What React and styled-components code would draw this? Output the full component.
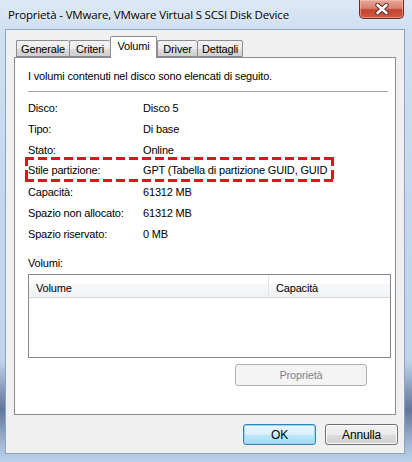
import React from 'react';
import styled, { createGlobalStyle } from 'styled-components';

const GlobalStyle = createGlobalStyle`
  html, body {
    margin: 0;
    padding: 0;
    background: #c9dbef;
  }
  body {
    font-family: "Liberation Sans", Arial, sans-serif;
    font-size: 11px;
    letter-spacing: -0.17px;
    color: #000;
  }
`;

const tabs = [
  { label: 'Generale', width: 53 },
  { label: 'Criteri', width: 41 },
  { label: 'Volumi', width: 47, active: true },
  { label: 'Driver', width: 40 },
  { label: 'Dettagli', width: 46 },
];

const props = [
  ['Disco:', 'Disco 5'],
  ['Tipo:', 'Di base'],
  ['Stato:', 'Online'],
  ['Stile partizione:', 'GPT (Tabella di partizione GUID, GUID', true],
  ['Capacità:', '61312 MB'],
  ['Spazio non allocato:', '61312 MB'],
  ['Spazio riservato:', '0 MB'],
];

const App = () => {
  return (
    <>
      <GlobalStyle />
      <Window>
        <TitleBar>
          <Title>Proprietà - VMware, VMware Virtual S SCSI Disk Device</Title>
          <CloseButton>
            <svg width="16" height="12" viewBox="0 0 16 12">
              <path
                d="M3.5 2 L12.5 10 M12.5 2 L3.5 10"
                stroke="#5a2a24"
                strokeWidth="4.4"
                strokeLinecap="round"
                fill="none"
              />
              <path
                d="M3.5 2 L12.5 10 M12.5 2 L3.5 10"
                stroke="#fff"
                strokeWidth="2.6"
                strokeLinecap="round"
                fill="none"
              />
            </svg>
          </CloseButton>
        </TitleBar>

        <Client>
          <TabStrip>
            {tabs.map((t) => (
              <Tab key={t.label} $w={t.width} $active={t.active}>
                {t.label}
              </Tab>
            ))}
          </TabStrip>

          <Panel>
            <Intro>I volumi contenuti nel disco sono elencati di seguito.</Intro>
            <Separator />
            <PropList>
              {props.map(([label, value, mark]) =>
                mark ? (
                  <MarkedRow key={label}>
                    <Label>{label}</Label>
                    <Value>{value}</Value>
                  </MarkedRow>
                ) : (
                  <Row key={label}>
                    <Label>{label}</Label>
                    <Value>{value}</Value>
                  </Row>
                )
              )}
            </PropList>

            <SectionLabel>Volumi:</SectionLabel>
            <ListBox>
              <ListHeader>
                <HeaderCell $w={240}>Volume</HeaderCell>
                <HeaderCell>Capacità</HeaderCell>
              </ListHeader>
            </ListBox>

            <PanelActions>
              <DisabledButton>Proprietà</DisabledButton>
            </PanelActions>
          </Panel>

          <DialogButtons>
            <DialogButton $default>OK</DialogButton>
            <DialogButton>Annulla</DialogButton>
          </DialogButtons>
        </Client>
      </Window>
    </>
  );
};

export default App;

const Window = styled.div`
  width: 412px;
  height: 462px;
  display: flex;
  flex-direction: column;
  box-sizing: border-box;
  padding: 0 7px 9px 5px;
  background:
    linear-gradient(to bottom, transparent 0, transparent 360px, rgba(20, 40, 90, 0.55) 410px, rgba(20, 40, 90, 0.2) 440px, transparent 462px),
    linear-gradient(to bottom, #dce8f5 0, #cfe0f2 30px, #c3d8ee 200px, #bcd3eb 100%);
`;

const TitleBar = styled.div`
  height: 29px;
  display: flex;
  justify-content: space-between;
  align-items: flex-start;
  margin-right: 1px;
`;

const Title = styled.div`
  font-family: "Open Sans", "Liberation Sans", sans-serif;
  font-size: 11.5px;
  line-height: 29px;
  padding-left: 3px;
  color: #000;
  letter-spacing: -0.18px;
  text-shadow: 0 0 6px rgba(255, 255, 255, 0.9);
`;

const CloseButton = styled.div`
  width: 45px;
  height: 19px;
  box-sizing: border-box;
  border: 1px solid #6b2b25;
  border-top: none;
  border-radius: 0 0 5px 5px;
  background: linear-gradient(to bottom, #e8a896 0, #d98170 45%, #c3432f 55%, #cf5b40 100%);
  box-shadow: inset 0 0 0 1px rgba(255, 200, 190, 0.5);
  display: flex;
  align-items: center;
  justify-content: center;
`;

const Client = styled.div`
  flex: 1;
  display: flex;
  flex-direction: column;
  background: #f0f0f0;
  border: 1px solid #8ea3bd;
  padding: 7px 8px 8px 8px;
`;

const TabStrip = styled.div`
  display: flex;
  align-items: flex-end;
  padding-left: 2px;
  height: 20px;
  position: relative;
  z-index: 1;
`;

const Tab = styled.div`
  width: ${({ $w }) => $w}px;
  box-sizing: border-box;
  height: ${({ $active }) => ($active ? 22 : 17)}px;
  margin-bottom: ${({ $active }) => ($active ? -1 : 0)}px;
  border: 1px solid #898c95;
  border-bottom: ${({ $active }) => ($active ? 'none' : '1px solid #898c95')};
  border-right: ${({ $active }) => ($active ? '1px solid #898c95' : 'none')};
  border-radius: 2px 2px 0 0;
  background: ${({ $active }) =>
    $active ? '#fff' : 'linear-gradient(to bottom, #f3f3f3 0, #ebebeb 50%, #dddddd 51%, #cfcfcf 100%)'};
  display: flex;
  justify-content: center;
  padding-top: ${({ $active }) => ($active ? 2 : 1)}px;
  line-height: 14px;
  &:last-child {
    border-right: 1px solid #898c95;
  }
`;

const Panel = styled.div`
  height: 358px;
  box-sizing: border-box;
  background: #fff;
  border: 1px solid #898c95;
  display: flex;
  flex-direction: column;
  padding: 11px 4px 0 13px;
`;

const Intro = styled.div`
  line-height: 14px;
`;

const Separator = styled.div`
  height: 1px;
  background: #a0a0a0;
  margin: 8px 3px 0 0;
`;

const PropList = styled.div`
  display: flex;
  flex-direction: column;
  margin-top: 5px;
`;

const Row = styled.div`
  display: flex;
  align-items: center;
  height: 21.1px;
`;

const MarkedRow = styled.div`
  display: flex;
  align-items: center;
  height: 19px;
  width: 303px;
  padding: 3px;
  margin: -3px 0 -1px -3px;
  background:
    repeating-linear-gradient(90deg, #e8101a 0 9px, transparent 9px 13px) left top / 100% 3px no-repeat,
    repeating-linear-gradient(90deg, #e8101a 0 9px, transparent 9px 13px) left bottom / 100% 3px no-repeat,
    repeating-linear-gradient(180deg, #e8101a 0 9px, transparent 9px 13px) left top / 3px 100% no-repeat,
    repeating-linear-gradient(180deg, #e8101a 0 9px, transparent 9px 13px) right top / 3px 100% no-repeat;
  overflow: hidden;
  white-space: nowrap;
`;

const Label = styled.div`
  width: 115px;
  flex-shrink: 0;
`;

const Value = styled.div`
  white-space: nowrap;
`;

const SectionLabel = styled.div`
  margin-top: 11px;
  line-height: 14px;
`;

const ListBox = styled.div`
  margin-top: 4px;
  height: 84px;
  box-sizing: border-box;
  border: 1px solid #828790;
  background: #fff;
`;

const ListHeader = styled.div`
  display: flex;
  height: 23px;
  box-sizing: border-box;
  border-bottom: 1px solid #d5d5d5;
  background: linear-gradient(to bottom, #fff 0, #fff 40%, #f7f8f9 41%, #f1f2f4 100%);
`;

const HeaderCell = styled.div`
  width: ${({ $w }) => ($w ? `${$w}px` : 'auto')};
  flex: ${({ $w }) => ($w ? 'none' : '1')};
  box-sizing: border-box;
  padding: 7px 0 0 7px;
  line-height: 13px;
  border-right: 1px solid #e3e5e8;
  &:last-child {
    border-right: none;
  }
`;

const PanelActions = styled.div`
  display: flex;
  justify-content: flex-end;
  margin-top: 6px;
  padding-right: 24px;
`;

const DisabledButton = styled.div`
  width: 132px;
  height: 22px;
  box-sizing: border-box;
  border: 1px solid #adb2b5;
  border-radius: 3px;
  background: #f4f4f4;
  color: #838383;
  display: flex;
  align-items: center;
  justify-content: center;
`;

const DialogButtons = styled.div`
  display: flex;
  justify-content: flex-end;
  gap: 9px;
  margin: 9px -2px 0 0;
`;

const DialogButton = styled.div`
  width: 73px;
  height: 21px;
  box-sizing: border-box;
  border: 1px solid ${({ $default }) => ($default ? '#3c7fb1' : '#707070')};
  border-radius: 3px;
  background: ${({ $default }) =>
    $default
      ? 'linear-gradient(to bottom, #eaf6fd 0, #d9f0fc 50%, #bee6fd 51%, #a7d9f5 100%)'
      : 'linear-gradient(to bottom, #f2f2f2 0, #ebebeb 50%, #dddddd 51%, #cfcfcf 100%)'};
  box-shadow: ${({ $default }) =>
    $default ? 'inset 0 0 0 1px #94d8f8' : 'inset 0 0 0 1px #fcfcfc'};
  display: flex;
  align-items: center;
  justify-content: center;
  font-size: 12px;
`;
